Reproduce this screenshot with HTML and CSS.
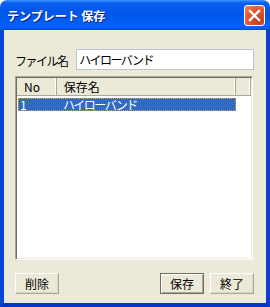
FILE: index.html
```html
<!DOCTYPE html>
<html lang="ja">
<head>
    <meta charset="UTF-8">
    <title>テンプレート 保存</title>
    <link rel="stylesheet" href="styles.css">
</head>
<body>
    <div class="window">
        <div class="titlebar">
            <span class="title">テンプレート 保存</span>
            <button class="close" aria-label="閉じる">
                <svg width="21" height="21" viewBox="0 0 21 21">
                    <path d="M6 6 L15 15 M15 6 L6 15" stroke="#fff" stroke-width="2.4" stroke-linecap="square" fill="none"/>
                </svg>
            </button>
        </div>
        <div class="client">
            <div class="name-row">
                <label class="name-label kana">ファイル名</label>
                <div class="name-input kana">ハイローバンド</div>
            </div>

            <div class="list">
                <div class="list-head">
                    <div class="col col-no">No</div>
                    <div class="col col-name">保存名</div>
                    <div class="col col-fill"></div>
                </div>
                <div class="list-row selected">
                    <span class="cell-no">1</span>
                    <span class="cell-name kana">ハイローバンド</span>
                </div>
            </div>

            <div class="buttons">
                <button class="btn">削除</button>
                <span class="spacer"></span>
                <button class="btn default">保存</button>
                <button class="btn">終了</button>
            </div>
        </div>
    </div>
</body>
</html>
```

FILE: styles.css
```css
body {
    margin: 0;
    background: #fff;
    font-family: 'Noto Sans CJK JP', 'Liberation Sans', sans-serif;
    font-size: 12px;
    color: #000;
}
.window {
    width: 270px;
    height: 307px;
    display: flex;
    flex-direction: column;
}
.titlebar {
    height: 30px;
    flex-shrink: 0;
    display: flex;
    align-items: center;
    padding: 0 5px 0 7px;
    border-radius: 7px 7px 0 0;
    background: linear-gradient(to bottom, #3f93ff 0%, #0a5ff0 10%, #0055ea 45%, #0262f6 85%, #0a5ce8 94%, #0042d6 100%);
    box-sizing: border-box;
}
.title {
    flex: 1;
    color: #fff;
    font-weight: bold;
    font-size: 12px;
    text-shadow: 1px 1px 0 #0a1f8c;
    padding-top: 1px;
}
.close {
    width: 21px;
    height: 21px;
    padding: 0;
    border: 1px solid #fff;
    border-radius: 3px;
    background: radial-gradient(circle at 70% 75%, #c23b18 0%, #e2582f 55%, #f0885f 100%);
    display: flex;
    align-items: center;
    justify-content: center;
    margin-top: 1px;
}
.close svg {
    display: block;
    margin: -1px;
}
.client {
    flex: 1;
    display: flex;
    flex-direction: column;
    background: #ece9d8;
    border: 4px solid #0a48dc;
    border-top: none;
    border-left-color: #0846da;
    border-right-color: #0a3fd0;
    border-bottom-color: #0535c4;
    padding: 19px 12px 0 11px;
}
.kana {
    letter-spacing: -1.5px;
}
.name-row {
    display: flex;
    align-items: center;
    height: 21px;
}
.name-label {
    width: 62px;
    padding-top: 2px;
}
.name-input {
    width: 176px;
    height: 19px;
    line-height: 19px;
    border: 1px solid #b9c5d3;
    background: #fff;
    padding-left: 2px;
}
.list {
    margin-top: 6px;
    width: 238px;
    height: 184px;
    box-sizing: border-box;
    background: #fff;
    border: 1px solid;
    border-color: #aca899 #fff #fff #aca899;
    box-shadow: inset 1px 1px 0 #716f64, inset -1px -1px 0 #f1efe2;
    padding: 1px;
}
.list-head {
    display: flex;
    height: 17px;
    background: #ece9d8;
    border-bottom: 1px solid #aca899;
}
.col {
    box-sizing: border-box;
    height: 17px;
    line-height: 17px;
    padding-left: 7px;
    border-right: 1px solid #aca899;
    box-shadow: inset -1px 0 0 #fff;
}
.col-no {
    width: 40px;
}
.col-name {
    width: 181px;
}
.col-fill {
    width: 15px;
}
.list-row {
    display: flex;
    height: 13px;
    line-height: 13px;
    margin: 2px 15px 0 1px;
}
.list-row.selected {
    background: #316ac5;
    color: #fff;
    outline: 1px dotted #e9a23a;
    outline-offset: -1px;
}
.cell-no {
    width: 43px;
    padding-left: 2px;
}
.cell-name {
    flex: 1;
}
.buttons {
    display: flex;
    gap: 6px;
    margin-top: 13px;
}
.spacer {
    flex: 1;
}
.btn {
    width: 44px;
    height: 21px;
    padding: 0;
    font-family: inherit;
    font-size: 12px;
    background: #ece9d8;
    border: 1px solid;
    border-color: #fff #aca899 #aca899 #fff;
    box-shadow: inset -1px -1px 0 #dad6c4;
}
.btn.default {
    border-color: #716f64;
    box-shadow: inset 1px 1px 0 #fff, inset -1px -1px 0 #aca899;
}
```
